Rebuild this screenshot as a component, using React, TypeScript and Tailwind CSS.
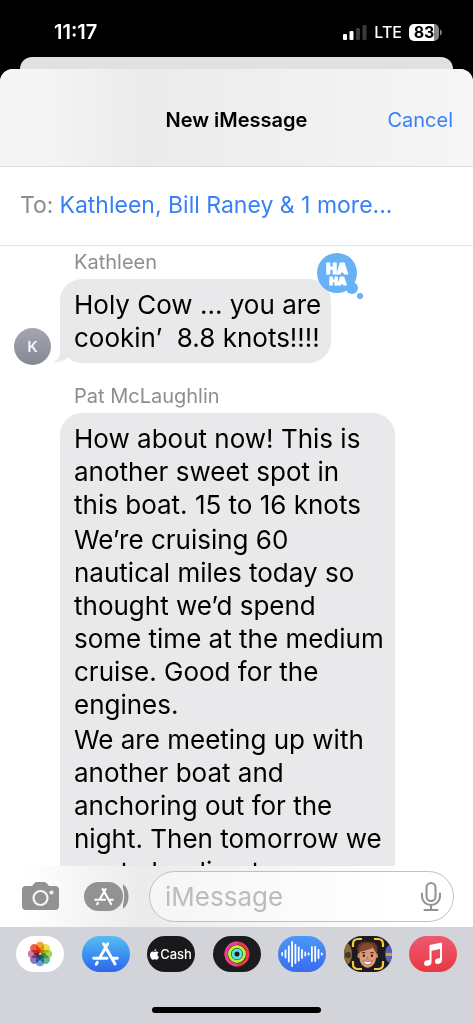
import type { ReactNode } from "react";

const petals = [
  { color: "#f59a23", angle: 0 },
  { color: "#e8df2e", angle: 45 },
  { color: "#a4cc4a", angle: 90 },
  { color: "#4fb083", angle: 135 },
  { color: "#5597dc", angle: 180 },
  { color: "#8568b5", angle: 225 },
  { color: "#cf6f9b", angle: 270 },
  { color: "#e84f3b", angle: 315 },
];

const waveBars = [4, 9, 17, 26, 20, 15, 10, 5, 3, 16, 16, 10, 3];

function StatusBar() {
  return (
    <div className="flex h-[57px] shrink-0 items-center justify-between pt-[7px] pr-[31px] pl-[54px] text-white">
      <span className="text-[20px] leading-6 font-semibold">11:17</span>
      <div className="flex items-center gap-[7px]">
        <svg width="24" height="16" viewBox="0 0 24 16" aria-hidden="true">
          <rect x="0" y="10" width="4" height="6" rx="1" fill="#fff" />
          <rect x="6.5" y="7" width="4" height="9" rx="1" fill="#fff" />
          <rect x="13" y="4" width="4" height="12" rx="1" fill="#3a3a3a" />
          <rect x="19.5" y="1" width="4" height="15" rx="1" fill="#3a3a3a" />
        </svg>
        <span className="text-[16px] leading-5 font-medium">LTE</span>
        <div className="relative flex h-[17px] w-[33px] items-center">
          <svg className="absolute inset-0" width="33" height="17" viewBox="0 0 33 17" aria-hidden="true">
            <path d="M5 0h20v17H5a5 5 0 0 1-5-5V5a5 5 0 0 1 5-5z" fill="#fff" />
            <path d="M25 0a5 5 0 0 1 5 5v7a5 5 0 0 1-5 5z" fill="#858585" />
            <path d="M31 5.5c2.500.8 2.500 5.200 0 6z" fill="#858585" />
          </svg>
          <span className="relative w-[30px] text-center text-[16px] leading-4 font-bold text-black">83</span>
        </div>
      </div>
    </div>
  );
}

function AppStoreGlyph({ width }: { width: number }) {
  return (
    <svg width={width} height={width} viewBox="0 0 24 24" fill="none" stroke="#fff" strokeWidth="2.6" strokeLinecap="round" aria-hidden="true">
      <path d="M14 2.5 6.8 15M10.300 2.500 20.500 20.500M1.500 15.300h11.800M17.500 15.300h5M4.700 19 3.800 20.600" />
    </svg>
  );
}

function CameraIcon() {
  return (
    <svg width="37" height="29" viewBox="0 0 37 29" aria-hidden="true">
      <path d="M4 4h6l2.500-3Q13.500 0 15 0h7q1.500 0 2.500 1L27 4h6q4 0 4 4v16q0 4-4 4H4q-4 0-4-4V8q0-4 4-4z" fill="#929294" />
      <circle cx="18.500" cy="16" r="7" fill="none" stroke="#f5f5f5" strokeWidth="2.200" />
      <circle cx="29.500" cy="10.500" r="2" fill="#f5f5f5" />
    </svg>
  );
}

function HahaReaction() {
  return (
    <svg className="absolute -top-[27px] -right-[33px]" width="48" height="48" viewBox="0 0 48 48" role="img" aria-label="Haha">
      <circle cx="21" cy="21" r="20" fill="#67b1f6" />
      <circle cx="36" cy="36" r="6" fill="#67b1f6" />
      <circle cx="44" cy="44" r="3" fill="#67b1f6" />
      <text fill="#fff" stroke="#fff" strokeWidth="1.200" strokeLinejoin="round" fontWeight="900" textAnchor="middle">
        <tspan x="21" y="22" fontSize="14">HA</tspan>
        <tspan x="22" y="32.500" fontSize="11">HA</tspan>
      </text>
    </svg>
  );
}

function BubbleTail() {
  return (
    <svg className="absolute bottom-0 -left-[7px]" width="24" height="22" viewBox="0 0 24 22" aria-hidden="true">
      <path d="M7 0v11c0 5-3 9-7 10 5 1 11-1 14-4l8-4V0z" fill="#e9e9eb" />
    </svg>
  );
}

function PhotosIcon() {
  return (
    <svg width="26" height="26" viewBox="0 0 26 26" aria-hidden="true">
      {petals.map((petal) => (
        <rect
          key={petal.angle}
          x="9"
          y="0.800"
          width="8"
          height="11.500"
          rx="4"
          fill={petal.color}
          fillOpacity="0.9"
          style={{ mixBlendMode: "multiply" }}
          transform={`rotate(${petal.angle} 13 13)`}
        />
      ))}
    </svg>
  );
}

function FitnessIcon() {
  return (
    <svg width="26" height="26" viewBox="0 0 26 26" fill="none" strokeWidth="3" aria-hidden="true">
      <circle cx="13" cy="13" r="11" stroke="#ed3b4c" />
      <path d="M13 24a11 11 0 0 1 0-22" stroke="#ec3f8e" />
      <circle cx="13" cy="13" r="7.500" stroke="#b5f23c" />
      <circle cx="13" cy="13" r="4" stroke="#5be3dc" />
    </svg>
  );
}

function AudioIcon() {
  return (
    <svg width="44" height="28" viewBox="0 0 44 28" stroke="#fff" strokeWidth="1.800" strokeLinecap="round" aria-hidden="true">
      {waveBars.map((bar, i) => (
        <path key={i} d={`M${2.2 + i * 3.3} ${15 - bar / 2}v${bar - 2}`} />
      ))}
    </svg>
  );
}

function MemojiIcon() {
  return (
    <svg width="48" height="36" viewBox="0 0 48 36" aria-hidden="true">
      <ellipse cx="2" cy="18" rx="6" ry="11" fill="#8b6a35" />
      <circle cx="4" cy="19" r="3" fill="#46382d" />
      <ellipse cx="46" cy="18" rx="5" ry="9" fill="#5963b5" />
      <path d="M42 17h6v3h-6z" fill="#d8a33b" />
      <g transform="translate(3.500 2.500) scale(.86)">
        <path d="M12 16C9 5 18 2 25 4c8-1 12 5 9 13l-2 6H14z" fill="#64351f" />
        <ellipse cx="13.500" cy="20" rx="2" ry="3" fill="#c88767" />
        <ellipse cx="33.500" cy="20" rx="2" ry="3" fill="#c88767" />
        <path d="M14 15c5 0 11-2 15-5l4 6v7c0 6-5 11-9.500 11S14 29 14 23z" fill="#d99b78" />
        <path d="M13 18c2-6 13-3 18-9l3 9C36 3 12-1 13 18z" fill="#84492b" />
        <path d="M16.500 17q2-1.500 4 0M26.500 17q2-1.500 4 0" stroke="#4a2717" strokeWidth="1.300" fill="none" />
        <circle cx="19" cy="20" r="1.400" fill="#2d211d" />
        <circle cx="28.500" cy="20" r="1.400" fill="#2d211d" />
        <path d="M23.500 21l-1 3h2" stroke="#b77053" fill="none" />
        <path d="M18 26q6 1.500 11 0-1 4.500-5.500 4.500T18 26z" fill="#fff" stroke="#8c4434" strokeWidth=".8" />
      </g>
      <path d="M9 11V8q0-5 5-5h4M30 3h4q5 0 5 5v3M9 25v3q0 5 5 5h4M30 33h4q5 0 5-5v-3" stroke="#f7c93b" strokeWidth="2.200" fill="none" />
    </svg>
  );
}

function MusicIcon() {
  return (
    <svg width="20" height="24" viewBox="0 0 20 24" aria-hidden="true">
      <path d="M6.500 3 19 .500V18q0 3.500-4 4-3 .2-3-2.500 0-3 3.500-3.300l1.500-.2V7L8.500 8.800V20q0 3.500-4 4Q1 24 1 21.500q0-3 3.500-3.300l2-.3z" fill="#fff" />
    </svg>
  );
}

function CashIcon() {
  return (
    <span className="flex items-center gap-px text-[13px] leading-4 font-medium text-white">
      <svg width="9" height="11" viewBox="0 0 18 22" fill="#fff" aria-hidden="true">
        <path d="M12.500 0c.2 2-1.500 4.600-4 4.700C8.300 2.500 10.300.300 12.500 0zM9 6c1 0 2-1 4-1 1.800 0 3.300.9 4.200 2.200-3.700 2.300-3.100 7 .8 8.600C17 18.500 15 21.500 13 21.500c-1.500 0-2-.9-3.700-.9-1.800 0-2.300.9-3.700.9C3 21.500 0 16.500 0 12c0-4.500 2.800-7 5.500-7C7 5 8 6 9 6z" />
      </svg>
      Cash
    </span>
  );
}

const drawerApps: { label: string; color: string; icon: ReactNode }[] = [
  { label: "Photos", color: "bg-white", icon: <PhotosIcon /> },
  { label: "App Store", color: "bg-linear-to-b from-[#56bdf5] to-[#3064ea]", icon: <AppStoreGlyph width={27} /> },
  { label: "Apple Cash", color: "bg-[#19191b]", icon: <CashIcon /> },
  { label: "Fitness", color: "bg-[#1c1c1e]", icon: <FitnessIcon /> },
  { label: "Audio", color: "bg-linear-to-b from-[#4d97f6] to-[#386cf0]", icon: <AudioIcon /> },
  { label: "Memoji", color: "bg-[#1c1c1e]", icon: <MemojiIcon /> },
  { label: "Music", color: "bg-linear-to-b from-[#ed5a70] to-[#e8363e]", icon: <MusicIcon /> },
];

function Messages() {
  return (
    <main className="min-h-0 flex-1 overflow-hidden pl-[60px]">
      <p className="pt-[4px] pl-[14px] text-[20px] leading-6 text-[#8e8e92]">Kathleen</p>
      <div className="relative mt-[5px] w-[271px] rounded-[22px] bg-[#e9e9eb] px-[14px] pt-[9px] pb-[9px] text-[26px] leading-[33px]">
        <BubbleTail />
        <p className="relative whitespace-pre">{"Holy Cow ... you are\ncookin’  8.8 knots!!!!"}</p>
        <HahaReaction />
        <span className="absolute bottom-[-2px] -left-[46px] flex size-[37px] items-center justify-center rounded-full bg-linear-to-b from-[#a3a7b2] to-[#858892] text-[15px] font-medium text-white">
          K
        </span>
      </div>
      <p className="pt-[21px] pl-[14px] text-[20px] leading-6 text-[#8e8e92]">Pat McLaughlin</p>
      <div className="mt-[5px] w-[335px] space-y-[2px] rounded-[22px] bg-[#e9e9eb] px-[14px] pt-[9px] pb-[9px] text-[26px] leading-[33px] whitespace-pre">
        <p>{"How about now! This is\nanother sweet spot in\nthis boat. 15 to 16 knots"}</p>
        <p>{"We’re cruising 60\nnautical miles today so\nthought we’d spend\nsome time at the medium\ncruise. Good for the\nengines."}</p>
        <p>{"We are meeting up with\nanother boat and\nanchoring out for the\nnight. Then tomorrow we\nare to be direct"}</p>
      </div>
    </main>
  );
}

function ComposeBar() {
  return (
    <div className="flex h-[61px] shrink-0 items-center bg-linear-to-r from-white from-5% via-[#ebebeb] via-30% to-white to-85% pr-[19px] pl-[22px]">
      <button type="button" aria-label="Camera">
        <CameraIcon />
      </button>
      <button type="button" aria-label="Apps" className="ml-[25px] flex items-center">
        <span className="flex h-[29px] w-[39px] items-center justify-center rounded-full bg-[#929294]">
          <AppStoreGlyph width={20} />
        </span>
        <svg width="6" height="27" viewBox="0 0 6 27" aria-hidden="true">
          <path d="M-3.500 0C8.500 1.500 8.500 25.500-3.500 27 2.500 22 3 5-3.500 0z" fill="#929294" />
        </svg>
      </button>
      <div className="ml-[20px] flex h-[51px] min-w-0 flex-1 items-center rounded-full border border-[#c0c0c2] bg-white/50 pr-[12px] pl-[15px]">
        <input
          type="text"
          aria-label="iMessage"
          placeholder="iMessage"
          className="min-w-0 flex-1 bg-transparent text-[26px] leading-8 outline-none placeholder:text-[#bcbcbe]"
        />
        <button type="button" aria-label="Dictate">
          <svg width="20" height="29" viewBox="0 0 20 29" fill="none" stroke="#929294" strokeWidth="2" strokeLinecap="round" aria-hidden="true">
            <rect x="5.500" y="1" width="9" height="18" rx="4.500" />
            <path d="M1 11.500v3a9 8.500 0 0 0 18 0v-3M10 23v5M3.500 28h13" />
          </svg>
        </button>
      </div>
    </div>
  );
}

export default function App() {
  return (
    <div className="flex h-screen flex-col overflow-hidden bg-black font-['Inter',sans-serif] text-black">
      <StatusBar />
      <div className="mx-[20px] h-3 shrink-0 rounded-t-[12px] bg-[#e1e1e1]" />

      <div className="flex min-h-0 flex-1 flex-col overflow-hidden rounded-t-[13px] bg-white">
        <header className="grid h-[98px] shrink-0 grid-cols-[1fr_auto_1fr] items-center border-b border-[#dcdcdc] bg-linear-to-r from-[#f5f5f5] from-8% via-[#ebebeb] via-30% to-[#f6f6f6] px-[20px] pt-[4px]">
          <h1 className="col-start-2 text-[20px] leading-6 font-semibold">New iMessage</h1>
          <button type="button" className="justify-self-end text-[20px] leading-6 text-[#3880f7]">
            Cancel
          </button>
        </header>

        <div className="flex h-[79px] shrink-0 items-center gap-[6px] border-b border-[#e4e4e6] px-[20px] pb-[2px] text-[23px] leading-8 whitespace-nowrap">
          <span className="text-[#8e8e92]">To:</span>
          <a href="#recipients" className="text-[#3880f7]">
            Kathleen, Bill Raney &amp; 1 more...
          </a>
        </div>

        <Messages />
        <ComposeBar />

        <footer className="flex h-[96px] shrink-0 flex-col items-center justify-between bg-[#d2d4da] pt-[9px] pb-[10px]">
          <nav className="flex w-full justify-between px-[16px]">
            {drawerApps.map((app) => (
              <button
                key={app.label}
                type="button"
                aria-label={app.label}
                className={`flex h-[36px] w-[48px] items-center justify-center overflow-hidden rounded-full ${app.color}`}
              >
                {app.icon}
              </button>
            ))}
          </nav>
          <div className="h-[6px] w-[169px] rounded-full bg-black" />
        </footer>
      </div>
    </div>
  );
}
